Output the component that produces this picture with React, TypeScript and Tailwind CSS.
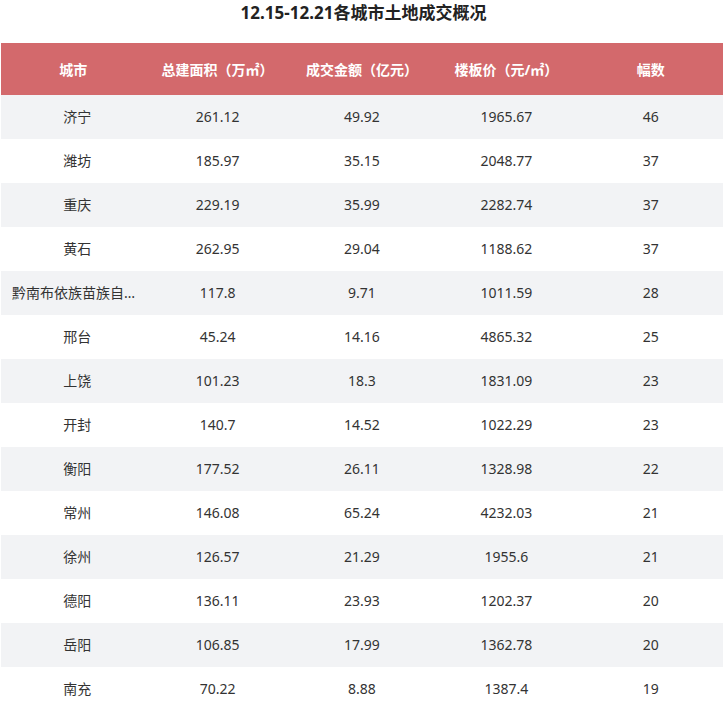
import React from "react";

const rows: [string, string, string, string, string][] = [
  ["济宁", "261.12", "49.92", "1965.67", "46"],
  ["潍坊", "185.97", "35.15", "2048.77", "37"],
  ["重庆", "229.19", "35.99", "2282.74", "37"],
  ["黄石", "262.95", "29.04", "1188.62", "37"],
  ["黔南布依族苗族自治州", "117.8", "9.71", "1011.59", "28"],
  ["邢台", "45.24", "14.16", "4865.32", "25"],
  ["上饶", "101.23", "18.3", "1831.09", "23"],
  ["开封", "140.7", "14.52", "1022.29", "23"],
  ["衡阳", "177.52", "26.11", "1328.98", "22"],
  ["常州", "146.08", "65.24", "4232.03", "21"],
  ["徐州", "126.57", "21.29", "1955.6", "21"],
  ["德阳", "136.11", "23.93", "1202.37", "20"],
  ["岳阳", "106.85", "17.99", "1362.78", "20"],
  ["南充", "70.22", "8.88", "1387.4", "19"],
];

const headers = ["城市", "总建面积（万㎡）", "成交金额（亿元）", "楼板价（元/㎡）", "幅数"];

export default function App() {
  return (
    <div
      className="w-[727px] h-[709px] overflow-hidden bg-white text-[#333]"
      style={{ fontFamily: '"Noto Sans", "Noto Sans CJK SC", sans-serif' }}
    >
      <div className="h-[43px] pt-[1px] text-center text-[17px] font-bold leading-[24px] text-[#222]">
        12.15-12.21各城市土地成交概况
      </div>
      <div className="pl-px w-[723px]">
        <table className="w-[722px] table-fixed border-collapse text-[14px]">
          <thead>
            <tr className="bg-[#d3696c] text-white h-[52px]">
              {headers.map((h) => (
                <th key={h} className="font-bold text-center px-0 whitespace-nowrap">
                  {h}
                </th>
              ))}
            </tr>
          </thead>
          <tbody>
            {rows.map((r, i) => (
              <tr key={i} className={i % 2 === 0 ? "bg-[#f2f3f5] h-[44px]" : "bg-white h-[44px]"}>
                {r.map((c, j) => (
                  <td key={j} className={j === 0 ? "text-center pl-[11px] pr-[3px] pb-[1px]" : "text-center px-[11px] pb-[1px]"}>
                    <div className="truncate" title={c}>{c}</div>
                  </td>
                ))}
              </tr>
            ))}
          </tbody>
        </table>
      </div>
    </div>
  );
}
